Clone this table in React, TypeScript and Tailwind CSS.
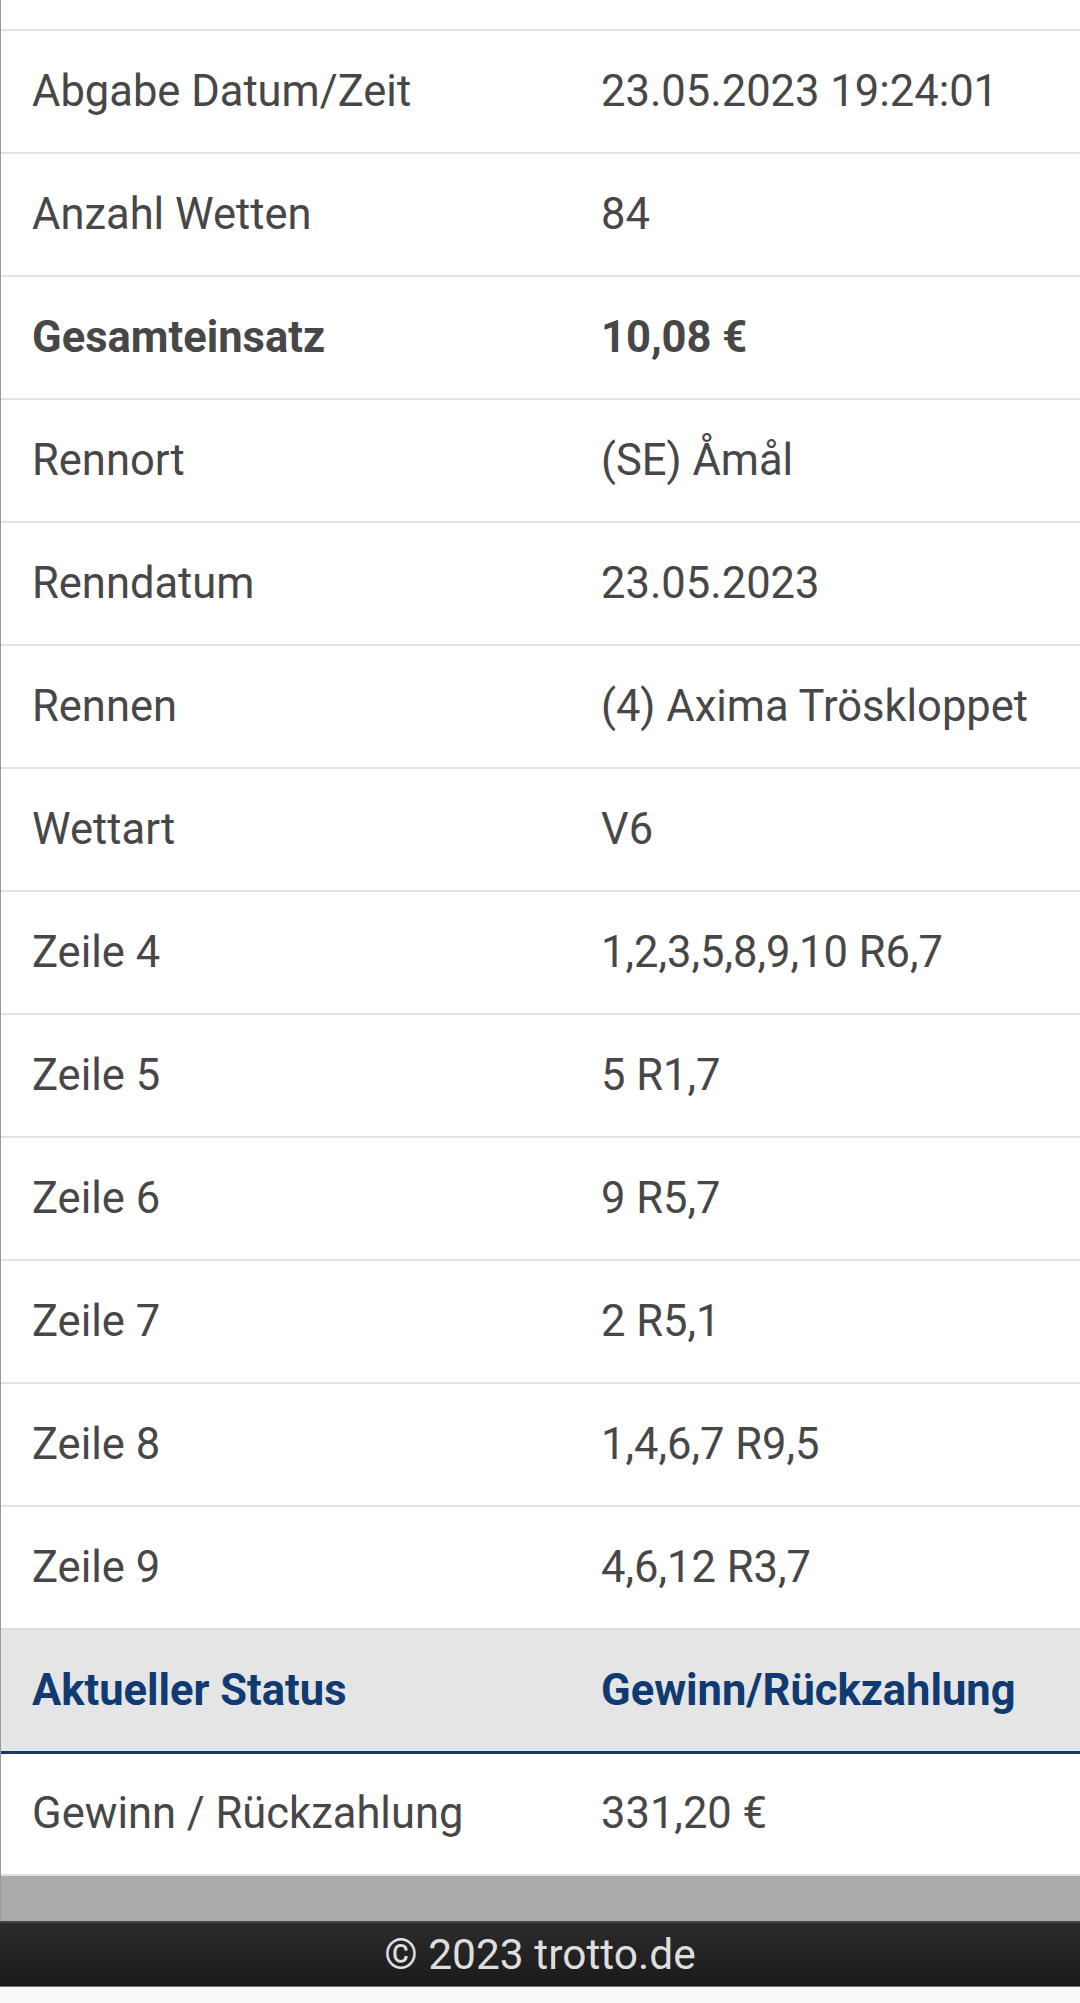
const rows: { label: string; value: string; bold?: boolean }[] = [
  { label: "Abgabe Datum/Zeit", value: "23.05.2023 19:24:01" },
  { label: "Anzahl Wetten", value: "84" },
  { label: "Gesamteinsatz", value: "10,08 €", bold: true },
  { label: "Rennort", value: "(SE) Åmål" },
  { label: "Renndatum", value: "23.05.2023" },
  { label: "Rennen", value: "(4) Axima Tröskloppet" },
  { label: "Wettart", value: "V6" },
  { label: "Zeile 4", value: "1,2,3,5,8,9,10 R6,7" },
  { label: "Zeile 5", value: "5 R1,7" },
  { label: "Zeile 6", value: "9 R5,7" },
  { label: "Zeile 7", value: "2 R5,1" },
  { label: "Zeile 8", value: "1,4,6,7 R9,5" },
  { label: "Zeile 9", value: "4,6,12 R3,7" },
];

function Row({ label, value, bold }: { label: string; value: string; bold?: boolean }) {
  return (
    <div className="flex h-[123px] items-center border-t-2 border-[#e2e2e2] text-[43.5px] text-[#474747]">
      <div className={`w-[600px] pl-[31px] ${bold ? "font-bold" : ""}`}>{label}</div>
      <div className={bold ? "font-bold" : ""}>{value}</div>
    </div>
  );
}

export default function App() {
  return (
    <div className="min-h-[2003px] bg-[#fafafa] font-['Roboto','Liberation_Sans',sans-serif]">
      <div className="border-l border-[#9a9a9a] bg-white pt-[29px]">
        {rows.map((r) => (
          <Row key={r.label} {...r} />
        ))}
        <div className="flex h-[126px] items-center border-t-2 border-b-[3px] border-t-[#dcdcdc] border-b-[#163a6a] bg-[#e5e5e5] text-[43.5px] font-bold text-[#0f3a72]">
          <div className="w-[600px] pl-[31px]">Aktueller Status</div>
          <div>Gewinn/Rückzahlung</div>
        </div>
        <div className="flex h-[120px] items-center text-[43.5px] text-[#474747]">
          <div className="w-[600px] pl-[31px]">Gewinn / Rückzahlung</div>
          <div>331,20 €</div>
        </div>
        <div className="h-[47px] border-t-2 border-[#e0e0e0] bg-[#ababab]" />
      </div>
      <div className="flex h-[66px] items-center justify-center border-t-2 border-b border-t-[#444] border-b-[#777] bg-gradient-to-b from-[#2c2c2c] to-[#1a1a1a] text-[42.5px] text-[#dedede]">
        © 2023 trotto.de
      </div>
    </div>
  );
}
